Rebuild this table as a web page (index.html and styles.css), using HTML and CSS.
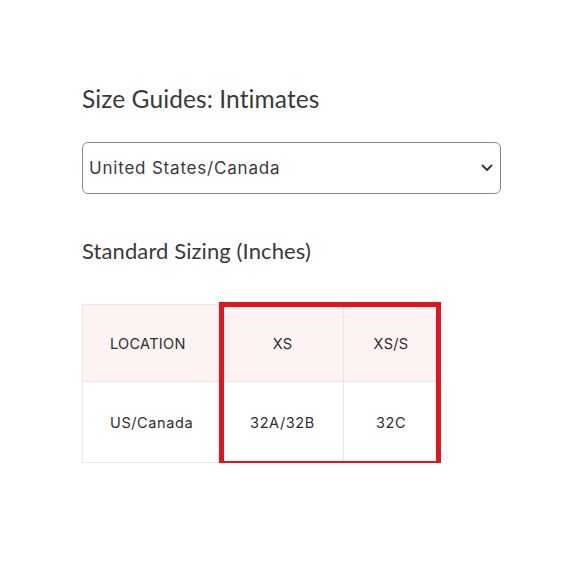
FILE: index.html
```html
<!DOCTYPE html>
<html>
<head>
<meta charset="utf-8">
<link rel="stylesheet" href="styles.css">
</head>
<body>
<main class="page">
  <h1 class="title">Size Guides: Intimates</h1>
  <div class="select">
    <span class="select-text">United States/Canada</span>
    <svg class="chevron" width="12" height="8" viewBox="0 0 12 8"><path d="M1.5 1.5 L6 6 L10.5 1.5" fill="none" stroke="#333" stroke-width="1.8" stroke-linecap="round" stroke-linejoin="round"/></svg>
  </div>
  <h2 class="subtitle">Standard Sizing (Inches)</h2>
  <div class="table-wrap">
    <table class="size-table">
      <thead>
        <tr>
          <th class="col-loc">LOCATION</th>
          <th class="col-xs">XS</th>
          <th class="col-xss">XS/S</th>
        </tr>
      </thead>
      <tbody>
        <tr>
          <td class="col-loc">US/Canada</td>
          <td class="col-xs">32A/32B</td>
          <td class="col-xss">32C</td>
        </tr>
      </tbody>
    </table>
    <div class="highlight"></div>
  </div>
</main>
</body>
</html>
```
FILE: styles.css
```css
html, body {
  margin: 0;
  padding: 0;
  background: #ffffff;
}
.page {
  padding: 83px 0 0 82px;
  font-family: "Open Sans", sans-serif;
  color: #333;
}
.title {
  margin: 0;
  font-family: "Lato", sans-serif;
  font-weight: 400;
  font-size: 24.5px;
  line-height: 32px;
  color: #3a3a3a;
  letter-spacing: 0.1px;
}
.select {
  margin-top: 27px;
  width: 419px;
  height: 52px;
  box-sizing: border-box;
  border: 1px solid #8a8a8a;
  border-radius: 6px;
  display: flex;
  align-items: center;
  justify-content: space-between;
  padding: 0 7px 0 6px;
}
.select-text {
  font-family: "Inter", sans-serif;
  font-size: 17px;
  color: #3a3a3a;
  letter-spacing: 0.8px;
}
.chevron {
  display: block;
}
.subtitle {
  margin: 42px 0 0 0;
  font-family: "Lato", sans-serif;
  font-weight: 400;
  font-size: 22px;
  line-height: 30px;
  color: #3a3a3a;
  letter-spacing: 0.1px;
}
.table-wrap {
  position: relative;
  margin-top: 38px;
  width: 360px;
}
.size-table {
  border-collapse: collapse;
  table-layout: fixed;
  font-family: "Inter", sans-serif;
  font-size: 14.5px;
  color: #2e2e2e;
}
.size-table th,
.size-table td {
  border: 1px solid #e6e6e6;
  text-align: center;
  font-weight: 400;
  padding: 0;
  letter-spacing: 0.6px;
}
.size-table th {
  background: #fcf3f2;
  height: 76px;
  letter-spacing: 0.3px;
}
.size-table th.col-loc,
.size-table td.col-loc {
  text-align: left;
  padding-left: 27px;
}
.size-table td {
  height: 80px;
}
.col-loc {
  width: 111px;
}
.col-xs {
  width: 121px;
}
.col-xss {
  width: 94px;
}
.highlight {
  position: absolute;
  left: 137px;
  top: -2px;
  width: 222px;
  height: 164px;
  box-sizing: border-box;
  border: 5.5px solid #e3141f;
}
```
